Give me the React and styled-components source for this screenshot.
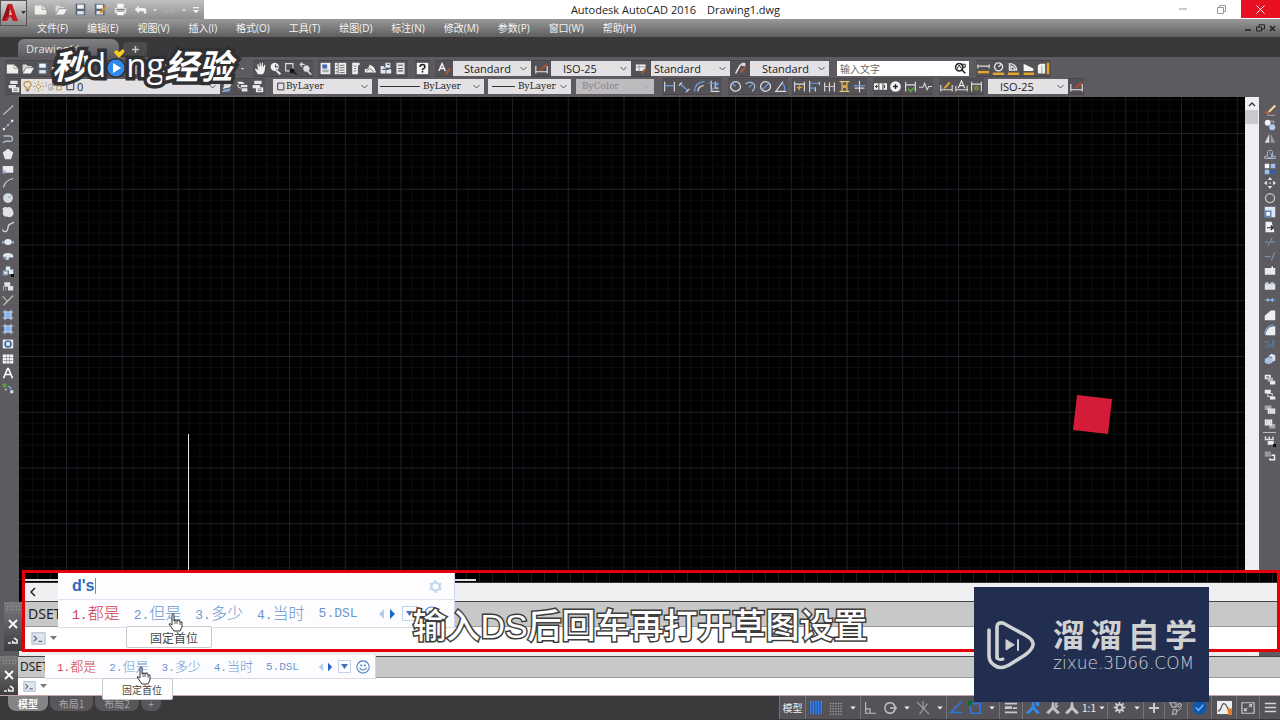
import React from "react";
import styled, { createGlobalStyle } from "styled-components";

const ui = `"Open Sans", "Noto Sans CJK SC", sans-serif`;
const cjk = `"Noto Sans CJK SC", sans-serif`;

const Global = createGlobalStyle`
  * { box-sizing: border-box; }
  body { margin: 0; background: #3a393c; font-family: ${ui}; font-size: 11px; }
  button, input, select { font: inherit; color: inherit; border: 0; margin: 0; padding: 0; background: none; border-radius: 0; outline: 0; }
`;

/* ---------- icon drawings, all on a 16 x 16 field ---------- */
const L = "#dcdce0";
const B = "#8fb0dc";
const Y = "#e3a52c";
const ln = (d, c = L, w = 1.4) => <path d={d} fill="none" stroke={c} strokeWidth={w} />;
const fl = (d, c = L) => <path d={d} fill={c} />;

const icons = {
  newFile: <>{fl("M1 3h9l5 5v6H1z", "#eeeeea")}{ln("M10 3v5h5", "#999", 1)}</>,
  open: <>{fl("M2 13V3h5l1 2h5v2H6z", "#d9d9d9")}{fl("M2 14l4-7h10l-4 7z", "#f1f1f1")}{ln("M3 13l3-6h9", "#777", 0.8)}</>,
  save: <>{fl("M2 1h12v14H2z", "#55677c")}{fl("M4 2h8v5H4z", "#f4f4f4")}{fl("M4 10h8v4H4z", "#e6e6e6")}</>,
  saveAs: <>{fl("M1 1h12v14H1z", "#55677c")}{fl("M3 2h8v5H3z", "#f4f4f4")}{fl("M3 10h8v4H3z", "#e6e6e6")}{fl("M8 10l6-7 2 2-6 7-3 1z", "#d98a2b")}</>,
  print: <>{fl("M4 1h8v5H4z", "#fafafa")}{fl("M1 6h14v7H1z", "#dcdcdc")}{fl("M4 10h8v5H4z", "#fff")}{ln("M3 8h10M4 10h8", "#666", 1)}</>,
  undo: <>{fl("M6 3v3h6q3 0 3 3v4h-3v-3H6v3L1 8z", "#f2f2f2")}</>,
  redo: <>{fl("M10 3v3H4Q1 6 1 9v4h3v-3h6v3l5-5z", "#a9a9ab")}</>,
  down: fl("M3 6h10l-5 6z", "#e8e8e8"),
  downBig: fl("M1 4h14l-7 8z", "#f0f0f0"),
  customize: <>{fl("M3 3h10v2H3zM3 8h10l-5 5z", "#f4f4f4")}</>,
  plus: ln("M8 3v10M3 8h10", "#ccc", 2),
  hand: fl("M5 15L1 9l1-1 3 2-1-7 1-1 2 5V1h1l1 5 1-5h1v6l2-4 1 1-1 7-2 4z", "#f2f2f2"),
  zoom: <>{fl("M7 1a5 5 0 1 0 .1 0zM9 9l6 5-2 2-5-5z", "#eee")}{ln("M8 3v3h3", "#555")}</>,
  zoomWin: <>{ln("M2 2h9v9H2z")}{fl("M10 8a3 3 0 1 0 .1 0zM13 12l3 3-1 1-4-3z", "#111")}</>,
  zoomPrev: <>{ln("M1 3h6M1 3l3-2M1 3l3 3")}{fl("M9 4a4 4 0 1 0 .1 0zM12 11l4 4-2 1-4-4z", "#ddd")}</>,
  props: <>{fl("M2 1h12v14H2z", "#edf0f4")}{fl("M4 3h6v5H4z", "#456bb0")}{ln("M4 10h8M4 12h8", "#777", 1)}</>,
  palette: <>{fl("M1 1h14v14H1z", "#eee")}{ln("M5 1v14M7 4h6M7 7h6M7 10h6M7 13h6M2 4h2M2 8h2M2 12h2", "#555", 1)}</>,
  sheet: <>{fl("M4 1h9v3h-2v11H4z", "#eee")}{ln("M6 5h3M6 8h3M6 11h3", "#666", 1)}</>,
  cloud: <>{fl("M1 13V9l4-1 2-5 5 3 3 7z", "#eee")}{ln("M3 11l4-3 5 4", "#555", 1)}</>,
  markup: <>{fl("M2 5h6v9H2zM8 1h6v6H8zM9 9h6v5H9z", "#e5e9ee")}{ln("M4 3l4 4M10 3h3M4 9h8", "#4b6484")}</>,
  calc: <>{fl("M3 1h10v14H3z", "#e7e7e9")}{ln("M5 4h6M5 8h6M5 11h6", "#555")}</>,
  help: <>{fl("M1 1h14v14H1z", "#f7f7f7")}{ln("M5 6q0-3 3-3t3 3q0 1-3 3v1M8 11v2", "#222", 2)}</>,
  textStyle: <>{ln("M1 11L5 2l4 9M3 8h5", "#f0f0f0", 1.8)}{fl("M9 13l5-6 2 2-5 6-3 1z", "#a4573c")}</>,
  dimStyle: <>{ln("M1 5v9M15 5v9M1 12h14", "#e6e6e6")}{fl("M6 9l7-7 2 2-6 6-4 1z", "#a9492d")}</>,
  tableStyle: <>{fl("M1 3h12v8H1z", "#eee")}{ln("M1 6h12M5 3v8", "#888", 1)}{fl("M7 13l6-6 2 2-6 6z", "#a4573c")}</>,
  leaderStyle: <>{ln("M2 14l5-9 3-3", "#e6e6e6", 1.8)}{fl("M7 12l6-7 2 2-6 7z", "#a4573c")}{fl("M10 1h4v4h-4z")}</>,
  find: <>{ln("M7 2a5 5 0 1 0 .1 0M10 10l5 5", "#222", 2)}{ln("M4 9l3-5 3 5M11 3h4v4h-4z", "#222", 1.3)}</>,
  dist: <>{ln("M1 3v5M15 3v5M1 5h14", "#ddd")}{fl("M1 11h14v3H1z", Y)}</>,
  radius: <>{ln("M8 1a5 5 0 1 0 .1 0M8 6l3-3", "#e5e5e5", 1.6)}{fl("M1 13h14v3H1z", Y)}</>,
  angle: <>{ln("M3 10V2q8 0 9 8zM5 10V5q4 1 5 5", "#e5e5e5", 1.6)}{fl("M1 13h14v3H1z", Y)}</>,
  area: <>{fl("M2 2l12 6v3H2z", "#f4f4f4")}{fl("M2 13h13v3H2z", Y)}</>,
  volume: <>{fl("M1 4l3-2h6v12H1z", "#eee")}{ln("M6 5v9", "#999", 1)}{fl("M12 1h3v14h-3z", Y)}</>,
  layers: <>{fl("M4 1h9v4H4zM2 6h9v4H2z", "#e6e6e6")}{fl("M6 9h9v6H6z", "#f4f4f4")}{ln("M8 11h5M8 13h5", "#666", 1)}</>,
  layerMake: <>{fl("M5 3l9-2-2 4-9 2zM4 7l9-2-2 4-9 2z", "#e6e6e6")}{fl("M3 12l9-2-2 4-9 1z", "#7ea4d8")}</>,
  layerPrev: <>{fl("M1 2h7l3 3H4zM6 6h8v3H6zM7 10h7v4H7z", "#e6e6e6")}{ln("M3 5q-2 4 3 5", "#ddd")}</>,
  bulb: <>{ln("M8 1a4 4 0 0 1 2 8v3H6V9A4 4 0 0 1 8 1z", "#b08a2c", 1.6)}{fl("M6 13h4v2H6z", "#777")}</>,
  sun: <>{ln("M8 5a3 3 0 1 0 .1 0M8 0v3M8 13v3M0 8h3M13 8h3M2 2l2 2M12 12l2 2M14 2l-2 2M2 14l2-2", "#b99a45", 1.4)}</>,
  snow: <>{ln("M3 1v8M7 5h5v8H7zM11 9a2 2 0 1 0 .1 0", "#aaa8ac")}</>,
  lock: <>{fl("M2 7h9v8H2z", "#c3a15a")}{fl("M4 9h5v4H4z", "#eee")}{ln("M9 7V3h5v4", "#756b50", 1.6)}</>,
  square: <>{ln("M3 2h11v12H3z", "#222", 1.5)}</>,
  line: ln("M2 14L15 2", "#bbc0c4", 1.6),
  xline: <>{ln("M2 14L14 2", "#6e93c4")}{fl("M1 12h3v3H1zM12 1h3v3h-3zM7 7h2v2H7z", "#dfe7ef")}</>,
  pline: ln("M2 4h8q4 0 4 4t-4 3H5l-4 2", "#a9c0d8", 1.8),
  polygon: fl("M8 1l7 5-3 9H4L1 6z", "#e5e7ea"),
  rect: <>{fl("M1 4h14v9H1z", "#e8eaee")}{fl("M1 10h4v4H1z", B)}</>,
  arc: ln("M2 14Q4 4 15 2", "#cfd5db", 1.6),
  disc: <><circle cx="8" cy="8" r="6.5" fill="#d4dbe3" />{ln("M8 8l4-3", "#8294a9", 1)}</>,
  revcloud: fl("M1 3q3-3 6-1 5-2 7 3 3 6-1 9-4 2-6 0-5 1-6-4 0-3 1-4-2-1-1-3z", "#dfe3e7"),
  spline: ln("M1 11q0 4 4 3c5-1 1-9 6-10 3-1 5-2 4-3", "#cdd4db", 1.8),
  ellipse: <><ellipse cx="8" cy="8" rx="5" ry="4" fill="#e4e9ef" />{fl("M0 7h3v3H0zM13 7h3v3h-3z", B)}</>,
  ellArc: <>{fl("M1 8q1-5 8-4 7 1 6 6H9v3H5z", "#dde4ec")}{fl("M2 9h4v3H2z", "#6f93bd")}</>,
  block: <>{fl("M1 7h7v7H1z", "#7fa3d0")}{fl("M5 2h6v5H5zM9 6h6v6H9zM3 9h4v3H3z", "#e2e8ee")}{fl("M12 12h4v4h-4z", "#111")}</>,
  makeBlock: <>{fl("M3 3h8v6H3zM8 8h7v6H8z", "#dfe3e8")}{ln("M2 14V8M5 14v-4", "#91aac8")}</>,
  point: ln("M1 3l6 7M15 2L2 15", "#c0c8b8", 1.5),
  hatch: <>{fl("M3 3h10v10H3z", "#7fb0ef")}{ln("M1 4h14M1 12h14M4 1v14M12 1v14", "#bccbe0", 1.4)}</>,
  region: <>{fl("M1 2h14v12H1z", "#dfe6ee")}{ln("M8 4a4 4 0 1 0 .1 0", "#4267a5", 2.2)}</>,
  table: <>{fl("M1 2h14v12H1z", "#f4f4f4")}{ln("M1 6h14M1 10h14M6 3v11M10 3v11", "#8a8a8c", 1)}</>,
  textA: ln("M2 15L7.500 2h1L14 15M4.500 10h7", "#fff", 2.2),
  addSel: <>{fl("M1 2h5v5H1z", "#4fa43b")}{ln("M8 6q4 0 4 4", "#93b6dd")}{fl("M11 11h4v4h-4zM4 9h2v2H4z", "#cfe0f5")}</>,
  erase: <>{fl("M5 10L14 1l2 2-8 8z", "#f0d9a8")}{fl("M1 11l4-2 3 3-3 2z", "#c5602c")}{ln("M4 15h11", "#bbb", 1)}</>,
  copy: <><circle cx="5" cy="5" r="4" fill="#f1f3f6" /><circle cx="11" cy="11" r="4" fill="#b5ccec" />{ln("M9 3h4v3", "#9ab4d8")}</>,
  mirror: <>{fl("M7 1v12H1z", "#d8dce2")}{fl("M9 1v12h6z", "#8f9aa8")}</>,
  offset: ln("M1 14h14v-3h-4q2-8-3-8T5 11H1zM5 13h6q-2-7-3-7", "#a6bcd6", 1.3),
  array: <>{fl("M1 1h6v6H1z", "#f4f7fb")}{fl("M9 1h6v6H9zM1 9h6v6H1z", "#9cc0f0")}{fl("M9 9h6v6H9z", "#335fa5")}</>,
  move: fl("M8 0l3 4H5zM8 16l-3-4h6zM0 8l4-3v6zM16 8l-4 3V5zM7 7h2v2H7z", "#dde5ee"),
  rotate: ln("M5 3a6 6 0 1 0 6 0M5 3q3-1.500 6 0", "#c5c9c3", 1.7),
  scale: <>{fl("M1 1h14v14H1z", "#dfe9f5")}{fl("M1 6h9v9H1z", "#5c86bd")}{fl("M3 8h5v5H3z", "#f5f8fc")}</>,
  stretch: <>{fl("M2 1h8l4 14H2z", "#eef4fa")}{ln("M4 9h8M9 6l3 3-3 3", "#222", 1.5)}</>,
  trim: ln("M1 8h5M9 8h6M5 14L11 2", "#86a4c8", 1.2),
  extend: ln("M1 9h8M10 14l4-11", "#86a4c8", 1.2),
  breakPt: <>{fl("M1 4h14v9H1z", "#e4e7eb")}{fl("M10 2h2v4h-2z", "#fff")}</>,
  breakSel: <>{fl("M1 5h14v8H1z", "#dde3eb")}{fl("M2 3h4v3H2zM9 3h4v3H9z", "#bed0e6")}</>,
  join: <>{ln("M1 8h14", "#86b5e6")}{fl("M4 5l4 3-4 3zM12 5L8 8l4 3z", "#86b5e6")}</>,
  chamfer: fl("M1 15V9l8-7h6v13z", "#edeeef"),
  fillet: <>{fl("M2 15Q3 3 15 3v12z", "#edeeef")}{ln("M1 14Q2 2 13 1", "#76a7df", 1.6)}</>,
  blend: ln("M1 6q4-4 5 3t8-6M1 12h4M12 2v11", "#56799f", 1.8),
  explode: <>{fl("M1 8l5-3 5 2v6l-5 2-5-2z", "#a6c3e3")}{fl("M6 4l4-3 5 2v7l-4 2V6z", "#dbe6f2")}</>,
  front: <>{fl("M1 1h8v6H1z", "#eee")}{fl("M3 3h4v2H3z", "#777")}{fl("M8 9h7v5H8z", "#eee")}{fl("M5 5h7v5H5z", "#bbb")}</>,
  back: <>{fl("M1 1h8v5H1zM8 10h7v4H8z", "#eee")}{ln("M5 6h6v4H5z", "#ccc", 1.4)}</>,
  above: <>{fl("M1 2h9v6H1z", "#aaa")}{fl("M5 6h10v7H5z", "#eee")}{ln("M7 8h6v3H7z", "#bbb", 1)}</>,
  below: <>{fl("M7 8h8v6H7z", "#aaa")}{fl("M1 2h10v8H1z", "#eee")}{ln("M3 4h6v4H3z", "#bbb", 1)}</>,
  annoFront: <>{fl("M1 2h2v3h3V2h2v3h3V2h2v5H1z", "#ddd")}{fl("M5 8h8v5H5z", "#eee")}{fl("M12 12h4v4h-4z", "#111")}</>,
  hatchBack: <>{fl("M1 2h8v7H1z", "#9698a0")}{ln("M10 7h4v6H8v-2", "#eee", 2)}</>,
  dLinear: <>{ln("M2 2v12M14 2v12", "#ddd", 1.4)}{ln("M2 7h12", "#6aa1e6", 1.6)}</>,
  dAligned: <>{ln("M2 4l10 9", "#6aa1e6", 1.6)}{ln("M1 7l4-4M10 15l4-4", "#ddd")}</>,
  dArc: <>{ln("M2 14Q2 3 14 2", "#6aa1e6", 1.6)}{ln("M6 14q0-6 7-7", "#ddd")}</>,
  dOrd: <>{ln("M4 1v13h10M9 2v8h4", "#ddd")}{ln("M1 4h12M4 13l9-9", "#6aa1e6")}</>,
  dRadius: <>{ln("M8 2a6 6 0 1 0 .1 0", "#d9d9d9", 1.6)}{ln("M8 8L4 4", "#6aa1e6")}</>,
  dJog: <>{ln("M2 5q6-5 11 1 1 4-3 8", "#9fb8d7", 1.6)}{ln("M6 9l4-3", "#6aa1e6")}</>,
  dDia: <>{ln("M8 2a6 6 0 1 0 .1 0", "#d9d9d9", 1.6)}{ln("M4 12l8-8", "#6aa1e6")}</>,
  dAngle: <>{ln("M1 14h14M3 13L11 2", "#ddd")}{ln("M10 4q4 3 3 9", "#6aa1e6")}</>,
  dQuick: <>{ln("M2 2v12M14 2v12M2 5h12", "#ddd")}{fl("M8 6l1 2 3 1-3 1-1 3-2-3-2-1 3-1z", Y)}</>,
  dBase: <>{ln("M2 1v14M14 2v4M9 9v5", "#ddd")}{ln("M2 4h12M2 10h7", "#6aa1e6")}</>,
  dCont: <>{ln("M2 3v11M8 3v11M14 3v11", "#ddd")}{ln("M2 8h12", "#bbb")}</>,
  dSpace: <>{ln("M2 2h12M2 14h12M5 2v12M11 2v12", "#e6c372", 1.5)}{fl("M6 6h4v4H6z", Y)}</>,
  dBreak: <>{ln("M8 1v14M2 10h12", "#ddd")}{ln("M1 7h14", "#6aa1e6")}</>,
  tol: <>{fl("M0 4h16v8H0z", "#f4f4f4")}{ln("M6 4v8M11 4v8M3 6v4M1 8h4M13 6v4", "#333", 1.2)}</>,
  center: <><circle cx="8" cy="8" r="6.500" fill="#f4f4f4" />{ln("M8 5v6M5 8h6", "#222", 1.6)}</>,
  inspect: <>{ln("M2 2v12M14 2v12M2 6h12", "#ddd")}{ln("M5 11l3 3 5-5", "#5fa43b", 2)}</>,
  jogLine: ln("M0 9h5l2-5 3 8 2-4h4", "#dcdcdc", 1.3),
  dEdit: <>{ln("M1 6v8M15 6v8M1 12h14", "#ddd")}{fl("M5 9l6-7 2 2-6 6-3 1z", Y)}</>,
  dText: <>{ln("M1 7v7M15 7v7M1 12h14", "#ddd")}{ln("M4 10l4-9 4 9M6 7h4", "#eee")}</>,
  dUpdate: <>{ln("M2 2v12M14 2v12M2 5h12", "#ddd")}{ln("M8 8a2 2 0 1 0 .1 0", "#6c9b2b", 2)}</>,
  prompt: <>{fl("M1 2h14v12H1z", "#dfe6ef")}{ln("M1 2h14v12H1z", "#b3bfcd", 1.2)}{ln("M3 5l3 3-3 3M8 11h4", "#66717f", 1.4)}</>,
  gear: <>{ln("M8 3a5 5 0 1 0 .1 0M8 0v3M8 13v3M1 4l2 2M13 10l2 2M1 12l2-2M13 6l2-2", "#c2d6ec", 2.6)}</>,
  smile: <>{ln("M8 1a7 7 0 1 0 .1 0M4 9q4 5 8 0", "#4f83c8", 1.2)}{fl("M5 5h2v2H5zM9 5h2v2H9z", "#4f83c8")}</>,
  gridOn: <>{fl("M1 1h14v13H1z", "#2553a0")}{ln("M2 0v15M5 0v15M8 0v15M11 0v15M14 0v15", "#3d8df2", 1.3)}</>,
  snap: <path d="M1 3h14M1 6h14M1 9h14M1 12h14M1 15h14" stroke="#aaa" strokeWidth="1.2" strokeDasharray="1.500 1.500" />,
  ortho: ln("M3 1v13h12M3 9h5v5", "#b9b9bb"),
  polar: <>{ln("M8 2a6 6 0 1 0 .1 0M8 8h8M12 4l3 4-3 4", "#c4c4c6", 1.5)}</>,
  iso: ln("M1 1l14 14M8 0v9M13 3L4 15", "#a2a2a4", 1.3),
  track: ln("M14 1L2 13h13", "#2f76d6", 1.8),
  osnap: <>{ln("M3 3h11v11H3z", "#2f76d6", 1.8)}{fl("M0 0h5v5H0z", "#0c6b2a")}</>,
  weight: <>{fl("M1 2h14v2H1zM1 6h8v3H1zM10 7h5v2h-5zM1 12h14v2H1z", "#c8c8ca")}</>,
  annoVis: fl("M7 1h2l1 6 6 6-3 2-5-5-5 5-3-2 6-6zM10 1h5v5h-3z", "#3787e6"),
  annoAuto: fl("M7 1h2l1 6 6 6-3 2-5-5-5 5-3-2 6-6zM10 2l4 0-2 3 3 0-4 4z", "#bdbdbf"),
  annoScale: fl("M7 1h2l1 6 6 6-3 2-5-5-5 5-3-2 6-6z", "#c6c6c8"),
  gearDark: <>{ln("M8 4.500a3.500 3.500 0 1 0 .1 0M8 1v3M8 12v3M1 8h3M12 8h3M3 3l2 2M11 11l2 2M13 3l-2 2M3 13l2-2", "#d0d0d2", 2.2)}</>,
  isolate: <>{ln("M1 2h7v5H4zM12 3a2 2 0 1 0 .1 0M5 10h4l-1 5H4z", "#b5b5b7", 1.3)}{ln("M8 13l6-5", "#b5b5b7", 1)}</>,
  hardware: <><circle cx="8" cy="8" r="7.500" fill="#0d57ad" />{ln("M4 8l3 3 5-6", "#6fb1f2", 1.6)}</>,
  perf: <>{fl("M0 1h16v14H0z", "#eee")}{ln("M1 12q3-1 4-5t3-3 3 4 4 5", "#555", 1.3)}{fl("M11 9h5v7h-4z", "#dd7d32")}</>,
  clean: <>{ln("M1 2h14v12H1z", "#c4c4c6")}{ln("M4 11l3-3M9 7l3-3M9 4h3v3M4 8v3h3", "#c4c4c6", 1.4)}</>,
  menu: ln("M1 3h14M1 8h14M1 13h14", "#d4d4d6", 1.8),
};

const Icon = ({ n, s = 14 }) => (
  <svg width={s} height={s} viewBox="0 0 16 16" aria-hidden="true">{icons[n]}</svg>
);

/* ---------- page frame ---------- */
const Page = styled.div`
  position: relative;
  display: flex;
  flex-direction: column;
  min-height: 100vh;
  overflow: hidden;
`;
const TitleBar = styled.header`
  display: flex;
  height: 19px;
  background: #fff;
`;
const QuickBar = styled.div`
  display: flex;
  align-items: center;
  width: 204px;
  padding-left: 30px;
  background: linear-gradient(#c0c0c0, #8d8d8d);
`;
const Tool = styled.button`
  display: flex;
  flex: none;
  align-items: center;
  justify-content: center;
  width: ${(p) => p.$w || 15}px;
  height: ${(p) => p.$h || 14}px;
`;
const AppButton = styled.button`
  position: absolute;
  top: 0;
  left: 0;
  display: flex;
  align-items: center;
  gap: 2px;
  width: 27px;
  height: 26px;
  border: 1px solid #555;
  background: linear-gradient(#d4d4d4, #8a8a8a);
`;
const Title = styled.h1`
  display: flex;
  flex: 1;
  align-items: center;
  justify-content: center;
  gap: 11px;
  margin: 0;
  padding-right: 16px;
  color: #222;
  font-size: 11px;
  font-weight: 400;
`;
const WindowButton = styled.button`
  display: flex;
  align-items: center;
  justify-content: center;
  width: 39px;
  height: 18px;
  background: ${(p) => (p.$close ? "#e81123" : "transparent")};
`;
const MenuBar = styled.nav`
  display: flex;
  align-items: center;
  gap: 19px;
  height: 18px;
  padding: 0 2px 0 37px;
  background: linear-gradient(#999, #5e5e5f);
  color: #f4f4f4;
  font-size: 10px;
`;
const MenuLink = styled.a`
  color: inherit;
  line-height: 16px;
  text-decoration: none;
  white-space: nowrap;
`;
const DocButtons = styled.div`
  display: flex;
  gap: 1px;
  margin-left: auto;
`;
const TabBar = styled.div`
  display: flex;
  align-items: flex-end;
  height: 20px;
  padding-left: 18px;
  background: #3a383b;
`;
const FileTab = styled.button`
  width: 101px;
  height: 18px;
  padding-left: 8px;
  border-radius: 6px 8px 0 0;
  background: linear-gradient(#818183, #5d5b5f);
  color: #e2e2e2;
  text-align: left;
`;
const AddTab = styled.button`
  display: flex;
  align-items: center;
  justify-content: center;
  width: 24px;
  height: 14px;
  margin: 0 0 1px 4px;
  border-radius: 4px;
  background: #4c4a4d;
`;
const Toolbars = styled.div`
  padding: 2px 0 2px 5px;
  background: #5d5b5f;
`;
const ToolRow = styled.div`
  display: flex;
  align-items: center;
  height: 18px;
`;
const Group = styled.div`
  display: flex;
  flex: none;
  align-items: center;
  height: 17px;
  margin-left: ${(p) => p.$ml || 0}px;
  background: #535155;
  box-shadow: inset 0 -1px #48464a, inset 0 1px #48464a;
`;
const Field = styled.label`
  position: relative;
  display: flex;
  flex: none;
  align-items: center;
  width: ${(p) => p.$w}px;
  height: 15px;
  margin-left: ${(p) => p.$ml || 0}px;
  background: ${(p) => p.$bg || "#e4e1e5"};
  color: ${(p) => (p.$off ? "#858387" : "#222")};

  > svg:last-child { position: absolute; right: 3px; pointer-events: none; }
`;
const Select = styled.select`
  width: 100%;
  height: 15px;
  padding-left: ${(p) => p.$pl}px;
  appearance: none;
  font-family: ${(p) => (p.$serif ? `"DejaVu Serif", serif` : ui)};
  font-size: ${(p) => (p.$serif ? 9 : 11)}px;
  line-height: 15px;
  opacity: 1;
`;
const FieldArt = styled.span`
  position: absolute;
  left: ${(p) => p.$l}px;
  display: flex;
  align-items: center;
  pointer-events: none;
`;
const Rule = styled.span`
  width: ${(p) => p.$w}px;
  height: 1px;
  background: #333;
`;
const SearchInput = styled.input`
  width: 100%;
  padding-left: 3px;
  font-family: ${cjk};
  font-size: 10px;
  &::placeholder { color: #666; opacity: 1; }
`;

/* ---------- drawing area ---------- */
const Workspace = styled.main`
  position: relative;
  display: flex;
  flex: 1;
  min-height: 480px;
  background: #5d5b5f;
`;
const Rail = styled.aside`
  flex: none;
  width: ${(p) => p.$w}px;
  padding: 6px ${(p) => p.$pr}px 0 0;
`;
const RailGroup = styled.div`
  display: flex;
  flex-direction: column;
  align-items: center;
  justify-content: space-between;
  height: ${(p) => p.$h}px;
  margin-bottom: ${(p) => p.$mb || 0}px;
`;
const RailRule = styled.hr`
  width: 13px;
  margin: 0;
  border: 0;
  border-top: 1px solid #bbb;
`;
const Viewport = styled.section`
  display: flex;
  flex: 1;
  flex-direction: column;
  min-width: 0;
`;
const Canvas = styled.svg`
  display: block;
  flex: 1;
  width: 100%;
  min-height: 0;
  background: #000;
`;
const HScroll = styled.div`
  height: 14px;
  background: #ececee;
`;
const VScroll = styled.div`
  flex: none;
  width: 14px;
  background: #f0eef0;
`;
const ScrollArrow = styled.button`
  display: flex;
  align-items: center;
  justify-content: center;
  width: 14px;
  height: 13px;
`;
const ScrollThumb = styled.div`
  width: 13px;
  height: 14px;
  background: #cbc9cc;
`;

/* ---------- command line, normal and magnified ---------- */
const Callout = styled.section`
  position: absolute;
  right: 0;
  bottom: 4px;
  left: 22px;
  display: flex;
  flex-direction: column;
  border: 3px solid #e3000b;
  background: #fff;
`;
const CalloutStrip = styled.div`
  height: 10px;
  border-bottom: 1px solid #333;
  background: repeating-linear-gradient(90deg, #000 0 12px, #1c1c20 12px 13px);
`;
const StripMark = styled.div`
  width: 451px;
  height: 8px;
  border-bottom: 2px solid #ddd;
`;
const CalloutScroll = styled.div`
  display: flex;
  align-items: center;
  height: 18px;
  padding-left: 2px;
  background: #f0eff1;
`;
const History = styled.div`
  height: ${(p) => p.$h}px;
  padding-left: ${(p) => p.$pl}px;
  border-top: 1px solid #444;
  border-bottom: 1px solid #999;
  background: #c8c8c8;
  color: #222;
  font-family: "Noto Sans", sans-serif;
  font-size: ${(p) => p.$fs}px;
  line-height: ${(p) => p.$h - 2}px;
`;
const PromptRow = styled.label`
  display: flex;
  align-items: center;
  gap: 4px;
  height: ${(p) => p.$h}px;
  padding-left: ${(p) => p.$pl}px;
  background: #fff;
`;
const PromptInput = styled.input`
  flex: 1;
  height: 14px;
`;
const Grip = styled.div`
  display: flex;
  flex: none;
  flex-direction: column;
  align-items: center;
  gap: ${(p) => p.$gap}px;
  width: 18px;
  padding-top: 3px;
  background: linear-gradient(#7b797c, #3f3d40);
`;
const CalloutGrip = styled(Grip)`
  position: absolute;
  bottom: 5px;
  left: 4px;
  height: 49px;
`;
const Dots = styled.div`
  width: 14px;
  height: 6px;
  background: radial-gradient(#a09ea1 1px, transparent 1px) 0 0 / 3px 3px;
`;
const CommandLine = styled.section`
  position: relative;
  display: flex;
  height: 40px;
  border-bottom: 1px solid #c9a3a8;
  background: #fff;
`;
const CommandBody = styled.div`
  flex: 1;
`;

const Ime = styled.div`
  position: absolute;
  top: ${(p) => (p.$big ? 0 : -1)}px;
  left: ${(p) => (p.$big ? 33 : 45)}px;
  width: ${(p) => (p.$big ? 397 : 331)}px;
  border-right: 1px solid #ccd6ea;
  border-bottom: 1px solid #dfd9e4;
  background: #fdfdff;
`;
const ImeTyping = styled.div`
  display: flex;
  align-items: center;
  height: 27px;
  padding: 0 12px 0 14px;
  border-bottom: 1px solid #dfe6f3;
  color: #2c6cc0;
  font-family: "Liberation Sans", sans-serif;
  font-size: 16px;
  font-weight: 700;
`;
const Caret = styled.span`
  width: 1px;
  height: 16px;
  margin: 0 auto 0 1px;
  background: #d66;
`;
const Candidates = styled.ol`
  display: flex;
  align-items: center;
  gap: ${(p) => (p.$big ? 14 : 13)}px;
  height: ${(p) => (p.$big ? 27 : 23)}px;
  margin: 0;
  padding: 0 0 0 ${(p) => (p.$big ? 14 : 12)}px;
  color: #6a95cf;
  font-family: "Liberation Mono", ${cjk};
  font-size: ${(p) => (p.$big ? 13 : 11)}px;
  line-height: 20px;
  list-style: none;
`;
const Candidate = styled.li`
  color: ${(p) => (p.$first ? "#d2404b" : "inherit")};
  white-space: nowrap;
`;
const Hanzi = styled.span`
  font-family: ${cjk};
  font-size: ${(p) => (p.$big ? 16 : 13)}px;
  font-weight: 300;
`;
const ImeTools = styled.li`
  display: flex;
  align-items: center;
  gap: ${(p) => (p.$big ? 6 : 5)}px;
  margin-left: 6px;
`;
const ImeMore = styled.button`
  display: flex;
  align-items: center;
  justify-content: center;
  width: ${(p) => (p.$big ? 16 : 13)}px;
  height: ${(p) => (p.$big ? 15 : 13)}px;
  border: 1px solid #c5d3ea;
`;
const Hint = styled.div`
  position: absolute;
  top: ${(p) => (p.$big ? 53 : 22)}px;
  left: ${(p) => (p.$big ? 101 : 102)}px;
  width: ${(p) => (p.$big ? 86 : 71)}px;
  height: 22px;
  padding-left: ${(p) => (p.$big ? 23 : 19)}px;
  border: 1px solid #c8c8d0;
  border-radius: 2px;
  background: #fff;
  color: #444;
  font-family: ${cjk};
  font-size: ${(p) => (p.$big ? 12 : 10)}px;
  line-height: 21px;
  white-space: nowrap;
`;
const Pointer = styled.svg`
  position: absolute;
  top: ${(p) => (p.$big ? 40 : 10)}px;
  left: ${(p) => (p.$big ? 143 : 136)}px;
`;
const Caption = styled.p`
  position: absolute;
  right: 0;
  bottom: 8px;
  left: 0;
  margin: 0;
  color: #fff;
  font-family: ${cjk};
  font-size: 34px;
  font-weight: 500;
  line-height: 44px;
  text-align: center;
  -webkit-text-stroke: 3px #3d3d3d;
  paint-order: stroke fill;
  pointer-events: none;
`;
const CaptionLatin = styled.span`
  font-family: "Liberation Sans", sans-serif;
`;

/* ---------- status bar ---------- */
const StatusBar = styled.footer`
  display: flex;
  justify-content: space-between;
  height: 24px;
  background: #3a393c;
`;
const LayoutTabs = styled.div`
  display: flex;
  gap: 2px;
  padding-left: 8px;
`;
const LayoutTab = styled.button`
  width: ${(p) => p.$w}px;
  height: 15px;
  border-radius: 0 0 8px 8px;
  background: ${(p) => (p.$on ? "#858386" : "#59575a")};
  color: ${(p) => (p.$on ? "#fff" : "#aaa8ab")};
  font-family: ${cjk};
  font-size: 10px;
  font-weight: ${(p) => (p.$on ? 700 : 400)};
  line-height: 15px;
`;
const StatusTools = styled.div`
  display: flex;
  align-items: center;
  height: 23px;
  background: #555357;
`;
const StatusGroup = styled.div`
  display: flex;
  align-items: center;
  height: 23px;
  border-left: 1px solid #777579;
`;
const StatusText = styled.button`
  width: ${(p) => p.$w}px;
  color: #eee;
  font-family: ${cjk};
  font-size: 10px;
  white-space: nowrap;
`;

/* ---------- channel marks ---------- */
const Dong = styled.div`
  position: absolute;
  top: 44px;
  left: 52px;
  display: flex;
  align-items: center;
  height: 42px;
  color: #fff;
  font-family: ${cjk};
  font-size: 34px;
  font-style: italic;
  font-weight: 700;
  line-height: 42px;
  -webkit-text-stroke: 7px #303033;
  paint-order: stroke fill;
`;
const DongLatin = styled.span`
  font-family: "Open Sans", sans-serif;
  font-size: 33px;
  font-style: normal;
  font-weight: 500;
`;
const Brand = styled.div`
  position: absolute;
  right: 71px;
  bottom: 18px;
  display: flex;
  align-items: center;
  gap: 18px;
  width: 235px;
  height: 115px;
  padding-left: 13px;
  background: #222e50;
  color: #d0d1d3;
`;
const BrandName = styled.div`
  display: flex;
  justify-content: space-between;
  width: 144px;
  font-family: ${cjk};
  font-size: 32px;
  font-weight: 700;
  line-height: 32px;
`;
const BrandSite = styled.div`
  margin-top: 4px;
  font-family: "DejaVu Sans", sans-serif;
  font-size: 17px;
  font-weight: 200;
  line-height: 20px;
`;

/* ---------- pieces ---------- */
const Tools = ({ names, ml, w }) => (
  <Group $ml={ml}>
    {names.map((n, i) => <Tool key={i} $w={w} aria-label={n}><Icon n={n} s={13} /></Tool>)}
  </Group>
);
const Chevron = ({ c = "#555" }) => (
  <svg width="9" height="9" viewBox="0 0 9 9"><path d="M1.500 3l3 3 3-3" fill="none" stroke={c} /></svg>
);
const Triangle = () => (
  <svg width="7" height="5" viewBox="0 0 7 5"><path d="M0 0h7L3.500 4z" fill="#777" /></svg>
);
const Drop = ({ label, value, w, ml, pl, serif, off, art, artLeft = 4 }) => (
  <Field $w={w} $ml={ml} $off={off} $bg={off ? "#bdbbbe" : undefined}>
    <Select aria-label={label} $pl={pl} $serif={serif} disabled={off}><option>{value}</option></Select>
    {art && <FieldArt $l={artLeft}>{art}</FieldArt>}
    <Chevron c={off ? "#aaa" : undefined} />
  </Field>
);
const words = ["都是", "但是", "多少", "当时", "DSL"];
const CandidateList = ({ big }) => (
  <Candidates $big={big}>
    {words.map((w, i) => (
      <Candidate key={w} $first={i === 0}>
        {i + 1}.{w === "DSL" ? w : <Hanzi $big={big}>{w}</Hanzi>}
      </Candidate>
    ))}
    <ImeTools $big={big}>
      <svg width={big ? 18 : 15} height="12" viewBox="0 0 18 12"><path d="M6 1v10L1 6z" fill="#b8cbe8" /><path d="M12 1v10l5-5z" fill="#1763cf" /></svg>
      <ImeMore $big={big} aria-label="更多"><svg width="7" height="5" viewBox="0 0 7 5"><path d="M0 0h7L3.500 5z" fill="#4772b5" /></svg></ImeMore>
      <Icon n="smile" s={big ? 15 : 14} />
    </ImeTools>
  </Candidates>
);
const Cursor = ({ big }) => (
  <Pointer $big={big} width="15" height="19" viewBox="0 0 15 19">
    <path d="M4 12V2q0-1 1-1t1 1v6l1-1 2 1 2-1 1 2 2 0v5l-2 4H6l-5-7q1-1 3 1z" fill="#fff" stroke="#333" strokeWidth="1" />
    <path d="M7 8v3M9 8v3M12 9v3" stroke="#333" strokeWidth="0.8" />
  </Pointer>
);
const GripBody = ({ gap, Box }) => (
  <Box $gap={gap}>
    <Dots />
    <svg width="10" height="10" viewBox="0 0 10 10"><path d="M1 1l8 8M9 1L1 9" stroke="#fff" strokeWidth="1.800" /></svg>
    <svg width="12" height="7" viewBox="0 0 12 7"><path d="M1 6h3M5 6h5V3L7 1M7 6l-2-2" fill="none" stroke="#eee" strokeWidth="1.600" /></svg>
  </Box>
);

const menus = ["文件(F)", "编辑(E)", "视图(V)", "插入(I)", "格式(O)", "工具(T)", "绘图(D)", "标注(N)", "修改(M)", "参数(P)", "窗口(W)", "帮助(H)"];
const drawTools = ["line", "xline", "pline", "polygon", "rect", "arc", "disc", "revcloud", "spline", "ellipse", "ellArc", "block", "makeBlock", "point", "hatch", "hatch", "region", "table", "textA", "addSel"];
const editTools = ["erase", "copy", "mirror", "offset", "array", "move", "rotate", "scale", "stretch", "trim", "extend", "breakPt", "breakSel", "join", "chamfer", "fillet", "blend", "explode"];
const statusGroups = [
  [["gridOn", 20], ["snap", 19], ["downBig", 15]],
  [["ortho", 18], ["polar", 21], ["downBig", 13], ["iso", 20], ["downBig", 13]],
  [["track", 18], ["osnap", 20], ["downBig", 14]],
  [["weight", 22]],
  [["annoVis", 20], ["annoAuto", 20], ["annoScale", 18]],
];

export default function App() {
  return (
    <Page>
      <Global />
      <TitleBar>
        <QuickBar>
          {["newFile", "open", "save", "saveAs", "print", "undo"].map((n) => <Tool key={n} $w={20} aria-label={n}><Icon n={n} s={13} /></Tool>)}
          <Tool $w={10} aria-label="undo list"><Icon n="down" s={6} /></Tool>
          <Tool $w={19} aria-label="redo"><Icon n="redo" s={12} /></Tool>
          <Tool $w={10} aria-label="redo list"><Icon n="down" s={6} /></Tool>
          <Tool $w={14} aria-label="customize"><Icon n="customize" s={10} /></Tool>
        </QuickBar>
        <Title><span>Autodesk AutoCAD 2016</span><span>Drawing1.dwg</span></Title>
        <WindowButton aria-label="minimize"><svg width="8" height="8" viewBox="0 0 8 8"><path d="M0 4h8" stroke="#999" /></svg></WindowButton>
        <WindowButton aria-label="restore"><svg width="9" height="9" viewBox="0 0 9 9"><path d="M.5 2.500h6v6h-6zM2.500 2V.5h6v6H7" fill="none" stroke="#999" /></svg></WindowButton>
        <WindowButton $close aria-label="close"><svg width="9" height="9" viewBox="0 0 9 9"><path d="M.5.5l8 8M8.500.5l-8 8" stroke="#fff" /></svg></WindowButton>
      </TitleBar>
      <MenuBar>
        {menus.map((m) => <MenuLink key={m} href="#">{m}</MenuLink>)}
        <DocButtons>
          <Tool $w={12} aria-label="minimize drawing"><svg width="8" height="8" viewBox="0 0 8 8"><path d="M1 6h6" stroke="#222" strokeWidth="1.500" /></svg></Tool>
          <Tool $w={10} aria-label="restore drawing"><svg width="9" height="8" viewBox="0 0 9 8"><path d="M.5 3h5v4h-5zM3 3V.8h5.500V5H6" fill="none" stroke="#222" /></svg></Tool>
          <Tool $w={12} aria-label="close drawing"><svg width="7" height="7" viewBox="0 0 7 7"><path d="M1 1l5 5M6 1L1 6" stroke="#222" strokeWidth="1.500" /></svg></Tool>
        </DocButtons>
      </MenuBar>
      <AppButton aria-label="application menu">
        <svg width="18" height="20" viewBox="0 0 18 20"><path d="M1 18L7 1h4l6 17h-5l-3-5-3 5z" fill="#c61a20" /><path d="M7 1l2 10-8 7z" fill="#8d1014" /><path d="M9 6l2 6H8z" fill="#f6b3ad" /></svg>
        <svg width="5" height="4" viewBox="0 0 5 4"><path d="M0 0h5L2.500 3z" fill="#333" /></svg>
      </AppButton>
      <TabBar>
        <FileTab>Drawing1*</FileTab>
        <AddTab aria-label="new tab"><Icon n="plus" s={11} /></AddTab>
      </TabBar>

      <Toolbars>
        <ToolRow>
          <Tools names={["newFile", "open", "save", "print", "sheet", "markup", "saveAs", "cloud", "calc", "props", "palette", "table", "layers", "undo", "redo"]} />
          <Tool $w={25} aria-label="history"><Icon n="down" s={5} /></Tool>
          <Tools ml={-2} names={["hand", "zoom", "zoomWin", "zoomPrev"]} />
          <Tools ml={5} names={["props", "palette", "sheet", "cloud", "markup", "calc"]} />
          <Tools ml={7} names={["help"]} />
          <Tools ml={5} w={18} names={["textStyle"]} />
          <Drop label="文字样式" value="Standard" w={78} pl={11} />
          <Tools w={20} names={["dimStyle"]} />
          <Drop label="标注样式" value="ISO-25" w={80} pl={12} />
          <Tools w={20} names={["tableStyle"]} />
          <Drop label="表格样式" value="Standard" w={79} pl={3} />
          <Tools w={20} names={["leaderStyle"]} />
          <Drop label="引线样式" value="Standard" w={79} pl={12} />
          <Field $w={132} $ml={8} $bg="#fff"><SearchInput aria-label="查找文字" placeholder="输入文字" /><Icon n="find" s={12} /></Field>
          <Tools ml={7} names={["dist", "radius", "angle", "area", "volume"]} />
        </ToolRow>
        <ToolRow>
          <Tools w={16} names={["layers"]} />
          <Drop label="图层" value="0" w={199} pl={56} art={<><Icon n="bulb" s={11} /><Icon n="sun" s={11} /><Icon n="snow" s={11} /><Icon n="lock" s={10} /><Icon n="square" s={10} /></>} artLeft={1} />
          <Tools names={["layerMake", "layerPrev", "layers"]} />
          <Drop ml={8} label="颜色" value="ByLayer" w={99} pl={13} serif art={<Icon n="square" s={9} />} artLeft={3} />
          <Drop ml={6} label="线型" value="ByLayer" w={106} pl={45} serif art={<Rule $w={40} />} artLeft={2} />
          <Drop ml={4} label="线宽" value="ByLayer" w={83} pl={30} serif art={<Rule $w={23} />} />
          <Drop ml={5} label="打印样式" value="ByColor" w={78} pl={6} serif off />
          <Tools ml={8} names={["dLinear", "dAligned", "dArc", "dOrd"]} />
          <Tools ml={6} names={["dRadius", "dJog", "dDia", "dAngle"]} />
          <Tools ml={4} names={["dQuick", "dBase", "dCont", "dSpace", "dBreak"]} />
          <Tools ml={6} names={["tol", "center", "inspect", "jogLine"]} />
          <Tools ml={6} names={["dEdit", "dText", "dUpdate"]} />
          <Drop ml={4} label="当前标注样式" value="ISO-25" w={80} pl={12} />
          <Tools w={16} names={["dimStyle"]} />
        </ToolRow>
      </Toolbars>

      <Workspace>
        <Rail $w={19} $pr={4}>
          <RailGroup $h={292}>{drawTools.map((n, i) => <Tool key={i} aria-label={n}><Icon n={n} s={12} /></Tool>)}</RailGroup>
        </Rail>
        <Viewport>
          <Canvas role="img" aria-label="drawing">
            <defs>
              <pattern id="grid" x="47" y="36" width="55.75" height="55.75" patternUnits="userSpaceOnUse">
                <path d="M11.500 0v56M22.500 0v56M33.500 0v56M44.500 0v56M0 11.500h56M0 22.500h56M0 33.500h56M0 44.500h56" stroke="#0d0d0f" />
                <path d="M.5 0v56M0 .5h56" stroke="#1f1f29" />
              </pattern>
            </defs>
            <rect width="100%" height="100%" fill="url(#grid)" />
            <path d="M169.500 337v200" stroke="#e8e8e8" />
            <path d="M1058 298l35 4-4 35-35-4z" fill="#d41c39" />
          </Canvas>
          <HScroll />
        </Viewport>
        <VScroll>
          <ScrollArrow aria-label="scroll up"><svg width="8" height="6" viewBox="0 0 8 6"><path d="M1 5l3-3 3 3" fill="none" stroke="#333" strokeWidth="1.300" /></svg></ScrollArrow>
          <ScrollThumb />
        </VScroll>
        <Rail $w={21} $pr={0}>
          <RailGroup $h={263} $mb={7}>{editTools.map((n) => <Tool key={n} aria-label={n}><Icon n={n} s={12} /></Tool>)}</RailGroup>
          <RailGroup $h={90}>
            {["front", "back", "above", "below"].map((n) => <Tool key={n} aria-label={n}><Icon n={n} s={12} /></Tool>)}
            <RailRule />
            {["annoFront", "hatchBack"].map((n) => <Tool key={n} aria-label={n}><Icon n={n} s={12} /></Tool>)}
          </RailGroup>
        </Rail>

        <GripBody Box={CalloutGrip} gap={8} />
        <Callout>
          <CalloutStrip><StripMark /></CalloutStrip>
          <CalloutScroll><svg width="12" height="12" viewBox="0 0 12 12"><path d="M8 2L4 6l4 4" fill="none" stroke="#222" strokeWidth="1.500" /></svg></CalloutScroll>
          <History $h={26} $pl={3} $fs={14}>DSET</History>
          <PromptRow $h={22} $pl={6}>
            <Icon n="prompt" s={15} /><Triangle />
            <PromptInput aria-label="放大的命令行" />
          </PromptRow>
          <Ime $big>
            <ImeTyping>d's<Caret /><Icon n="gear" s={13} /></ImeTyping>
            <CandidateList big />
          </Ime>
          <Hint $big>固定首位</Hint>
          <Cursor big />
        </Callout>
        <Caption>输入<CaptionLatin>DS</CaptionLatin>后回车再打开草图设置</Caption>
      </Workspace>

      <CommandLine>
        <GripBody Box={Grip} gap={5} />
        <CommandBody>
          <History $h={22} $pl={2} $fs={12}>DSET</History>
          <PromptRow $h={17} $pl={5}>
            <Icon n="prompt" s={13} /><Triangle />
            <PromptInput aria-label="命令行" />
          </PromptRow>
        </CommandBody>
        <Ime><CandidateList /></Ime>
        <Hint>固定首位</Hint>
        <Cursor />
      </CommandLine>

      <StatusBar>
        <LayoutTabs>
          <LayoutTab $w={40} $on>模型</LayoutTab>
          <LayoutTab $w={43}>布局1</LayoutTab>
          <LayoutTab $w={44}>布局2</LayoutTab>
          <LayoutTab $w={20}>+</LayoutTab>
        </LayoutTabs>
        <StatusTools>
          <StatusGroup><StatusText $w={25}>模型</StatusText></StatusGroup>
          {statusGroups.map((g, i) => (
            <StatusGroup key={i}>
              {g.map(([n, w], k) => <Tool key={k} $w={w} aria-label={n}><Icon n={n} s={n === "downBig" ? 6 : 14} /></Tool>)}
              {i === 4 && <><StatusText $w={16}>1:1</StatusText><Tool $w={10} aria-label="scale list"><Icon n="downBig" s={6} /></Tool></>}
            </StatusGroup>
          ))}
          <StatusGroup><Tool $w={23} aria-label="workspace"><Icon n="gearDark" s={13} /></Tool><Tool $w={12} aria-label="workspace list"><Icon n="downBig" s={6} /></Tool></StatusGroup>
          <StatusGroup><Tool $w={20} aria-label="monitor"><Icon n="plus" s={16} /></Tool></StatusGroup>
          <StatusGroup><Tool $w={22} aria-label="isolate"><Icon n="isolate" /></Tool></StatusGroup>
          <StatusGroup><Tool $w={23} aria-label="hardware"><Icon n="hardware" s={15} /></Tool></StatusGroup>
          <StatusGroup><Tool $w={24} aria-label="performance"><Icon n="perf" s={15} /></Tool></StatusGroup>
          <StatusGroup><Tool $w={22} aria-label="clean screen"><Icon n="clean" s={14} /></Tool></StatusGroup>
          <StatusGroup><Tool $w={20} aria-label="customization"><Icon n="menu" s={13} /></Tool></StatusGroup>
        </StatusTools>
      </StatusBar>

      <Dong>
        秒<DongLatin>d</DongLatin>
        <svg width="20" height="36" viewBox="0 0 20 36">
          <circle cx="10" cy="21" r="10" fill="#303033" />
          <circle cx="10" cy="21" r="8.500" fill="#3189ec" />
          <path d="M7 16l8 5-8 5z" fill="#fff" />
          <path d="M13 11L8 6q0-3 3-3l2 2 4-3q3 2 0 5z" fill="#f5cd22" stroke="#303033" strokeWidth="1" />
        </svg>
        <DongLatin>ng</DongLatin>经验
      </Dong>
      <Brand>
        <svg width="48" height="50" viewBox="0 0 48 50" fill="none" stroke="#d0d1d3" strokeWidth="3.600" strokeLinecap="round" strokeLinejoin="round">
          <path d="M10 38V7q0-5 6-4l22 12q9 5 8 10-1 5-8 10L22 45q-9 5-15 0-5-3-5-10V10" />
          <path d="M10 36q0 5 6 3" strokeWidth="3" />
          <path d="M19 20v10l8-5z" fill="#d0d1d3" strokeWidth="1" />
          <path d="M31 20v10" strokeWidth="2" />
        </svg>
        <div>
          <BrandName><span>溜</span><span>溜</span><span>自</span><span>学</span></BrandName>
          <BrandSite>zixue.3D66.COM</BrandSite>
        </div>
      </Brand>
    </Page>
  );
}
